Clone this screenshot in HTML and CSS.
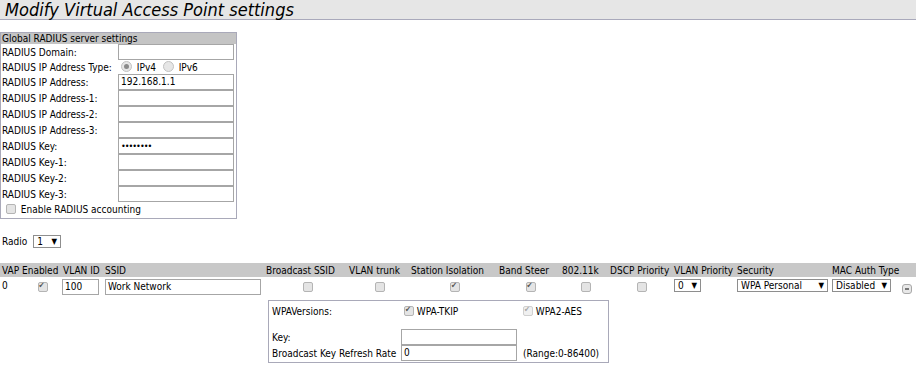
FILE: index.html
```html
<!doctype html>
<html lang="en">
<head>
    <meta charset="UTF-8">
    <title>Modify Virtual Access Point settings</title>
    <link rel="stylesheet" href="styles.css">
</head>
<body>
    <div class="title">Modify Virtual Access Point settings</div>

    <div class="radius-box">
        <div class="box-head">Global RADIUS server settings</div>
        <table class="form">
            <tr><td class="lbl">RADIUS Domain:</td><td><div class="txt"></div></td></tr>
            <tr class="type-row">
                <td class="lbl">RADIUS IP Address Type:</td>
                <td class="radios">
                    <span class="radio on"></span> IPv4
                    <span class="radio second"></span> IPv6
                </td>
            </tr>
            <tr><td class="lbl">RADIUS IP Address:</td><td><div class="txt">192.168.1.1</div></td></tr>
            <tr><td class="lbl">RADIUS IP Address-1:</td><td><div class="txt"></div></td></tr>
            <tr><td class="lbl">RADIUS IP Address-2:</td><td><div class="txt"></div></td></tr>
            <tr><td class="lbl">RADIUS IP Address-3:</td><td><div class="txt"></div></td></tr>
            <tr><td class="lbl">RADIUS Key:</td><td><div class="txt pw">&bull;&bull;&bull;&bull;&bull;&bull;&bull;&bull;</div></td></tr>
            <tr><td class="lbl">RADIUS Key-1:</td><td><div class="txt"></div></td></tr>
            <tr><td class="lbl">RADIUS Key-2:</td><td><div class="txt"></div></td></tr>
            <tr><td class="lbl">RADIUS Key-3:</td><td><div class="txt"></div></td></tr>
        </table>
        <div class="acct"><span class="chk"></span> Enable RADIUS accounting</div>
    </div>

    <div class="radio-row">
        Radio <span class="sel sel-radio">1 <b>&#9660;</b></span>
    </div>

    <table class="vap">
        <tr class="head">
            <th class="c-vap">VAP</th>
            <th class="c-en">Enabled</th>
            <th class="c-vlan">VLAN ID</th>
            <th class="c-ssid">SSID</th>
            <th class="c-bc">Broadcast SSID</th>
            <th class="c-trunk">VLAN trunk</th>
            <th class="c-iso">Station Isolation</th>
            <th class="c-band">Band Steer</th>
            <th class="c-k">802.11k</th>
            <th class="c-dscp">DSCP Priority</th>
            <th class="c-prio">VLAN Priority</th>
            <th class="c-sec">Security</th>
            <th class="c-mac">MAC Auth Type</th>
            <th></th>
        </tr>
        <tr class="row">
            <td class="vap-no">0</td>
            <td class="mid"><span class="chk on"></span></td>
            <td><div class="txt vlan-in">100</div></td>
            <td><div class="txt ssid-in">Work Network</div></td>
            <td class="mid"><span class="chk"></span></td>
            <td class="mid"><span class="chk"></span></td>
            <td class="mid"><span class="chk on"></span></td>
            <td class="mid"><span class="chk on"></span></td>
            <td class="mid"><span class="chk"></span></td>
            <td class="mid"><span class="chk"></span></td>
            <td><span class="sel sel-prio">0 <b>&#9660;</b></span></td>
            <td><span class="sel sel-sec">WPA Personal <b>&#9660;</b></span></td>
            <td><span class="sel sel-mac">Disabled <b>&#9660;</b></span></td>
            <td><span class="minus"></span></td>
        </tr>
        <tr>
            <td colspan="4"></td>
            <td colspan="10">
                <div class="wpa-box">
                    <table class="wpa">
                        <tr class="ver">
                            <td class="w-lbl">WPAVersions:</td>
                            <td class="w-mid"><span class="chk on"></span> WPA-TKIP</td>
                            <td class="w-end"><span class="chk on dis"></span> WPA2-AES</td>
                        </tr>
                        <tr>
                            <td>Key:</td>
                            <td><div class="txt"></div></td>
                            <td></td>
                        </tr>
                        <tr>
                            <td>Broadcast Key Refresh Rate</td>
                            <td><div class="txt">0</div></td>
                            <td class="w-end">(Range:0-86400)</td>
                        </tr>
                    </table>
                </div>
            </td>
        </tr>
    </table>
</body>
</html>
```

FILE: styles.css
```css
body {
    margin: 0;
    font-family: 'DejaVu Sans Condensed', 'DejaVu Sans', sans-serif;
    font-stretch: condensed;
    font-size: 10px;
    color: #000000;
    background-color: #ffffff;
}
.title {
    height: 19px;
    line-height: 19px;
    padding-left: 5px;
    background-color: #e6e6e6;
    border-bottom: 1px solid #a9a9bb;
    font-size: 18px;
    font-style: italic;
}
.radius-box {
    width: 235px;
    margin-top: 12px;
    border: 1px solid #a9a9b9;
}
.box-head {
    height: 11px;
    line-height: 11px;
    padding-left: 1px;
    background-color: #c4c4c4;
}
table {
    border-collapse: collapse;
}
td, th {
    padding: 0;
}
.form td {
    height: 16px;
}
.form .type-row td {
    height: 14px;
}
.form .lbl {
    width: 116px;
    padding-left: 1px;
}
.txt {
    box-sizing: border-box;
    width: 116px;
    height: 16px;
    line-height: 14px;
    padding-left: 2px;
    border: 1px solid #a6a6a6;
    background-color: #ffffff;
    white-space: nowrap;
}
.pw {
    letter-spacing: -1px;
    font-size: 9px;
}
.radios {
    padding-left: 3px;
}
.radio {
    display: inline-block;
    width: 9px;
    height: 9px;
    border: 1px solid #c2c2c2;
    border-radius: 50%;
    background-color: #e6e6e6;
    vertical-align: -1px;
    margin-right: 2px;
    position: relative;
}
.radio.second {
    margin-left: 4px;
}
.radio.on::after {
    content: "";
    position: absolute;
    left: 2px;
    top: 2px;
    width: 5px;
    height: 5px;
    border-radius: 50%;
    background-color: #8a8a8a;
}
.chk {
    display: inline-block;
    box-sizing: border-box;
    width: 10px;
    height: 10px;
    border: 1px solid #b4b4b4;
    border-radius: 2px;
    background-color: #e4e4e4;
    vertical-align: -1px;
    position: relative;
}
.chk.on::after {
    content: "\2714";
    position: absolute;
    left: 0;
    top: -2px;
    font-size: 8px;
    color: #555555;
}
.chk.dis {
    border-color: #d0d0d0;
    background-color: #f0f0f0;
}
.chk.dis::after {
    color: #a8a8a8;
}
.acct {
    height: 16px;
    line-height: 16px;
    padding-left: 5px;
}
.acct .chk {
    margin-right: 2px;
}
.radio-row {
    margin-top: 16px;
    padding-left: 2px;
    height: 14px;
    line-height: 14px;
}
.sel {
    display: inline-block;
    box-sizing: border-box;
    height: 13px;
    line-height: 11px;
    padding-left: 3px;
    border: 1px solid #8e8e8e;
    background-color: #ffffff;
    position: relative;
    vertical-align: top;
}
.sel b {
    position: absolute;
    right: 3px;
    top: 0;
    font-size: 8px;
    font-weight: normal;
}
.sel-radio {
    width: 28px;
    margin-left: 3px;
}
.vap {
    margin-top: 14px;
    width: 916px;
}
.vap .head th {
    height: 14px;
    background-color: #c8c8c8;
    font-weight: normal;
    text-align: left;
    white-space: nowrap;
}
.vap .row td {
    height: 18px;
    padding-top: 2px;
    vertical-align: top;
}
.vap .row .vap-no {
    padding-top: 3px;
    padding-left: 2px;
}
.vap .row .mid {
    text-align: center;
    padding-top: 5px;
}
.c-vap { width: 20px; padding-left: 2px; }
.c-en { width: 41px; }
.c-vlan { width: 42px; }
.c-ssid { width: 161px; }
.c-bc { width: 83px; }
.c-trunk { width: 62px; }
.c-iso { width: 88px; }
.c-band { width: 63px; }
.c-k { width: 48px; }
.c-dscp { width: 64px; }
.c-prio { width: 63px; }
.c-sec { width: 95px; }
.c-mac { width: 70px; }
.vlan-in {
    width: 37px;
    margin-left: -1px;
}
.ssid-in {
    width: 156px;
}
.sel-prio {
    width: 27px;
}
.sel-sec {
    width: 91px;
}
.sel-mac {
    width: 59px;
}
.minus {
    display: inline-block;
    box-sizing: border-box;
    width: 10px;
    height: 10px;
    margin-top: 5px;
    border: 1px solid #a8a8a8;
    border-radius: 3px;
    background-color: #e8e8e8;
    position: relative;
}
.minus::after {
    content: "";
    position: absolute;
    left: 2px;
    top: 3px;
    width: 4px;
    height: 2px;
    background-color: #777777;
}
.wpa-box {
    width: 333px;
    border: 1px solid #a9a9b9;
    margin-left: 2px;
    padding: 1px 3px 1px 3px;
}
.wpa td {
    height: 16px;
    white-space: nowrap;
}
.wpa .ver td {
    height: 23px;
    vertical-align: top;
    padding-top: 4px;
}
.wpa .w-lbl {
    width: 129px;
}
.wpa .w-mid {
    width: 117px;
}
.wpa .ver .w-mid {
    padding-left: 3px;
}
.wpa .w-end {
    padding-left: 2px;
}
```
